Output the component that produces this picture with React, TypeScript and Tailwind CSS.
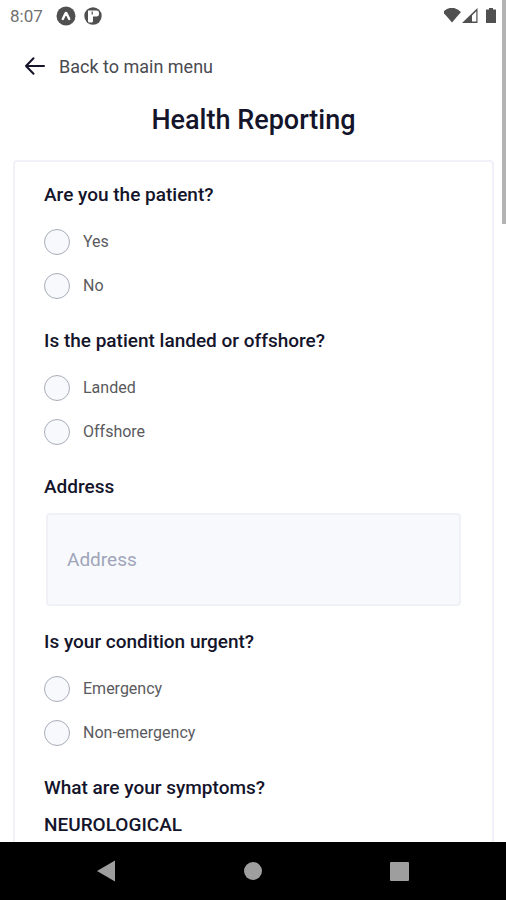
import React, { useState } from 'react';

interface RadioGroupProps {
  name: string;
  question: string;
  options: string[];
}

function StatusBar() {
  return (
    <div className="flex h-8 shrink-0 items-center justify-between pl-[10px] pr-2 text-[#505050]">
      <div className="flex items-center">
        <span className="text-[17px] leading-6 text-[#707070]">8:07</span>
        {/* Expo notification */}
        <svg className="ml-[13px] h-5 w-5" viewBox="0 0 20 20" aria-hidden="true">
          <circle cx="10" cy="10" r="9.500" fill="currentColor" />
          <path d="M6.800 13 9.400 7.500q.6-1 1.200 0L13.200 13" fill="none" stroke="#fff" strokeWidth="2.400" strokeLinecap="round" />
        </svg>
        {/* App badge */}
        <svg className="ml-2 h-[18px] w-[18px]" viewBox="0 0 18 18" aria-hidden="true">
          <circle cx="9" cy="9" r="8.700" fill="currentColor" />
          <path d="M4 3.500h8.500q2.500 0 2.500 2.200v1.600q0 2.200-2.500 2.200H9v4.500q0 1.500-1.500 1.500H5.500Q4 15.500 4 14z" fill="#fff" />
          <path d="M8.200 4.500v3" stroke="currentColor" strokeWidth="1.200" />
        </svg>
      </div>
      <svg className="h-4 w-[54px]" viewBox="0 0 54 16" aria-hidden="true">
        <path d="M-1 4Q8-4.500 17 4L8 14.500z" fill="currentColor" />
        <path d="M18 15 33.500 0v15z" fill="currentColor" />
        <path d="M28 7.500 32.300 3.200V13.600H28z" fill="#fff" />
        <path d="M42 1.500h3V0h4v1.500h3V15H42z" fill="currentColor" />
      </svg>
    </div>
  );
}

function RadioGroup({ name, question, options }: RadioGroupProps) {
  const [selected, setSelected] = useState<string | null>(null);

  return (
    <fieldset className="mb-[21px]">
      <legend className="mb-[13px] text-[19px] font-medium leading-6">{question}</legend>
      {options.map((option) => (
        <label key={option} className="flex h-11 items-center gap-[13px] text-[16px] text-[#5a5a5e]">
          <input
            type="radio"
            name={name}
            value={option}
            checked={selected === option}
            onChange={() => setSelected(option)}
            className="h-[26px] w-[26px] shrink-0 appearance-none rounded-full border border-[#a9adb9] bg-[#f7f9fc] checked:border-8 checked:border-[#14142b]"
          />
          {option}
        </label>
      ))}
    </fieldset>
  );
}

function NavigationBar() {
  return (
    <nav className="flex h-[58px] shrink-0 items-center justify-center gap-[118px] bg-black">
      <button type="button" aria-label="Back" className="flex w-7 justify-center">
        <svg className="h-[22px] w-5" viewBox="0 0 20 22" aria-hidden="true">
          <path d="M18 0.500v21L0 11z" fill="#9e9e9e" />
        </svg>
      </button>
      <button type="button" aria-label="Home" className="flex w-7 justify-center">
        <span className="h-[18px] w-[18px] rounded-full bg-[#9e9e9e]" />
      </button>
      <button type="button" aria-label="Recent apps" className="flex w-7 justify-center">
        <span className="h-[19px] w-[19px] rounded-[1px] bg-[#9e9e9e]" />
      </button>
    </nav>
  );
}

export default function App() {
  const [address, setAddress] = useState('');

  return (
    <div className="relative flex h-screen flex-col bg-white font-[Roboto,sans-serif] text-[#14142b]">
      <StatusBar />

      <main className="min-h-0 flex-1 overflow-y-auto pl-[13px] pr-3 [scrollbar-width:none]">
        <a href="#menu" className="mt-5 flex h-7 items-center gap-[14px] pl-3 text-[18px] text-[#4a4a50]">
          <svg className="h-5 w-5" viewBox="0 0 20 20" fill="none" stroke="#14142b" strokeWidth="2" strokeLinecap="round" strokeLinejoin="round" aria-hidden="true">
            <path d="M19 10H1M8.500 2.200 1 10l7.500 7.800" />
          </svg>
          Back to main menu
        </a>

        <h1 className="mt-6 text-center text-[27px] font-medium leading-8">Health Reporting</h1>

        <form className="mt-6 rounded-[4px] border-2 border-[#f1f2f9] px-[29px] pb-10 pt-[21px]">
          <RadioGroup name="patient" question="Are you the patient?" options={['Yes', 'No']} />
          <RadioGroup
            name="location"
            question="Is the patient landed or offshore?"
            options={['Landed', 'Offshore']}
          />

          <div className="mb-6">
            <label htmlFor="address" className="block text-[19px] font-medium leading-6">
              Address
            </label>
            <div className="mt-[14px] px-[2px]">
              <input
                id="address"
                type="text"
                placeholder="Address"
                value={address}
                onChange={(e) => setAddress(e.target.value)}
                className="block h-[93px] w-full rounded-[4px] border-2 border-[#eff1f6] bg-[#f7f9fd] px-[19px] text-[19px] placeholder:text-[#a0a5b9]"
              />
            </div>
          </div>

          <RadioGroup
            name="urgency"
            question="Is your condition urgent?"
            options={['Emergency', 'Non-emergency']}
          />

          <h2 className="text-[19px] font-medium leading-6">What are your symptoms?</h2>
          <h3 className="mt-[13px] text-[19px] font-medium leading-6">NEUROLOGICAL</h3>
        </form>
      </main>

      <NavigationBar />

      {/* Scroll indicator */}
      <div className="absolute right-0 top-0 h-[224px] w-1 bg-[#b3b3b3]" />
    </div>
  );
}
